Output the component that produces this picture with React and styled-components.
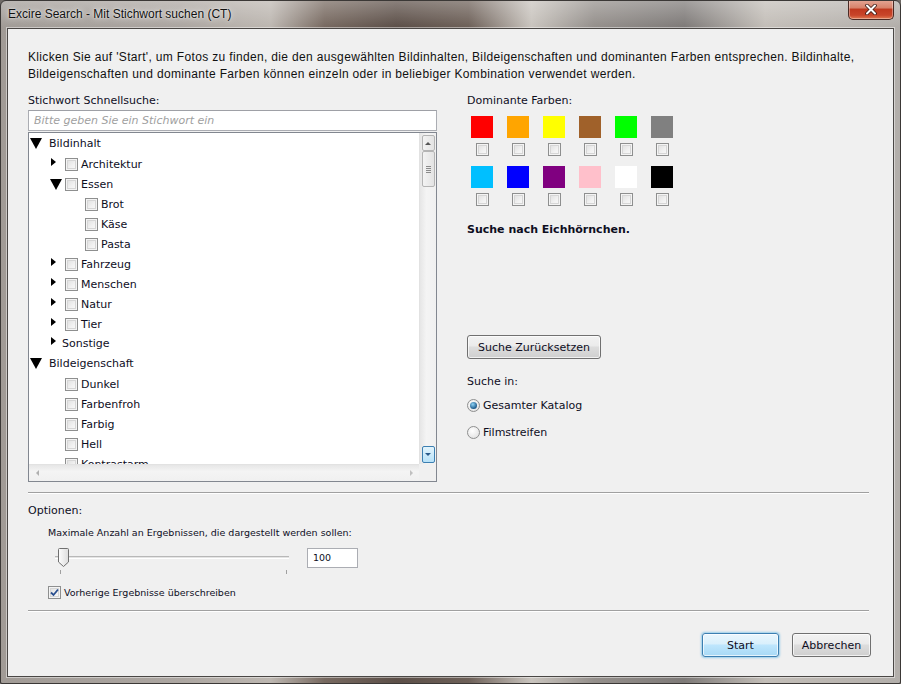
import styled, { createGlobalStyle } from "styled-components";

const GlobalStyle = createGlobalStyle`
  html, body {
    margin: 0;
    padding: 0;
    background: #6f6a66;
  }
  * {
    box-sizing: border-box;
  }
`;

const UI = `"DejaVu Sans", "Liberation Sans", sans-serif`;
const SEGOE = `"Liberation Sans", "Noto Sans", sans-serif`;

const Window = styled.div`
  width: 901px;
  height: 684px;
  border: 1px solid #3b3836;
  border-radius: 6px 6px 2px 2px;
  padding: 0 6px 6px 6px;
  display: flex;
  flex-direction: column;
  background:
    linear-gradient(to bottom, rgba(255, 255, 255, 0.28), rgba(255, 255, 255, 0) 26px),
    linear-gradient(
      to right,
      #a19b96 0%,
      #aca6a1 20%,
      #bdb7b1 30%,
      #776960 36%,
      #5c4f48 44%,
      #6d6058 52%,
      #c9c4be 59%,
      #948f8b 66%,
      #7e7a78 76%,
      #c3beb8 85%,
      #b2aeaa 100%
    );
  overflow: hidden;
`;

const TitleBar = styled.div`
  height: 27px;
  display: flex;
  align-items: flex-start;
  justify-content: space-between;
  margin-right: -6px;
`;

const Title = styled.div`
  font-family: ${SEGOE};
  font-size: 12px;
  color: #111;
  padding: 6px 0 0 1px;
  text-shadow: 0 0 6px rgba(255, 255, 255, 0.9), 0 0 2px rgba(255, 255, 255, 0.8);
`;

const CloseButton = styled.div`
  width: 46px;
  height: 20px;
  margin-right: 6px;
  margin-top: -1px;
  border: 1px solid #4a2a24;
  border-top: none;
  border-radius: 0 0 5px 5px;
  background: linear-gradient(to bottom, #e5a796 0%, #d8836c 40%, #c0391f 50%, #c8452a 80%, #e07a52 100%);
  box-shadow: inset 0 0 0 1px rgba(255, 255, 255, 0.35);
  display: flex;
  align-items: center;
  justify-content: center;
  svg {
    display: block;
  }
`;

const Client = styled.div`
  flex: 1;
  background: #f0f0f0;
  border: 1px solid #4a4745;
  box-shadow: 0 0 0 1px rgba(255, 255, 255, 0.45);
  padding: 20px 22px 0 20px;
  display: flex;
  flex-direction: column;
  font-family: ${UI};
  font-size: 11px;
  color: #0e0e1e;
`;

const Description = styled.p`
  margin: 0;
  font-family: ${SEGOE};
  font-size: 12px;
  letter-spacing: 0.34px;
  line-height: 17px;
  color: #111;
`;

const Main = styled.div`
  display: flex;
  gap: 30px;
  margin-top: 10px;
`;

const LeftCol = styled.div`
  width: 409px;
  display: flex;
  flex-direction: column;
`;

const RightCol = styled.div`
  flex: 1;
  display: flex;
  flex-direction: column;
`;

const Label = styled.div`
  line-height: 16px;
  height: 16px;
  margin-top: ${(p) => p.$top || 0}px;
  font-weight: ${(p) => (p.$bold ? "bold" : "normal")};
`;

const SearchInput = styled.input`
  margin-top: 1px;
  height: 21px;
  width: 100%;
  border: 1px solid #abadb3;
  border-top-color: #9ea0a6;
  background: #fff;
  padding: 0 5px;
  font-family: ${UI};
  font-size: 11px;
  font-style: italic;
  outline: none;
  &::placeholder {
    color: #a0a0a0;
  }
`;

const TreeBox = styled.div`
  margin-top: 1px;
  height: 350px;
  border: 1px solid #828790;
  background: #fff;
  display: grid;
  grid-template-columns: 1fr 17px;
  grid-template-rows: 1fr 17px;
`;

const TreeContent = styled.div`
  overflow: hidden;
`;

const Row = styled.div`
  height: ${(p) => p.$h}px;
  display: flex;
  align-items: center;
  padding-left: ${(p) => p.$indent}px;
  white-space: nowrap;
`;

const Expander = styled.span`
  width: ${(p) => p.$w || 12}px;
  flex: none;
  display: flex;
  align-items: center;
`;

const BigDown = styled.span`
  width: 0;
  height: 0;
  border-left: 6px solid transparent;
  border-right: 6px solid transparent;
  border-top: 11px solid #000;
`;

const SmallRight = styled.span`
  width: 0;
  height: 0;
  margin-left: 1px;
  margin-top: -4px;
  border-top: 4px solid transparent;
  border-bottom: 4px solid transparent;
  border-left: 5px solid #000;
`;

const Box = styled.span`
  width: 13px;
  height: 13px;
  flex: none;
  border: 1px solid #8e8f8f;
  background: linear-gradient(135deg, #dcdcdc 0%, #f2f2f2 60%, #fbfbfb 100%);
  box-shadow: inset 0 0 0 1px #f4f4f4, inset 0 0 0 2px #d6d6d6;
  display: inline-flex;
  align-items: center;
  justify-content: center;
  margin: ${(p) => p.$margin || "0 3px 0 3px"};
  svg {
    display: block;
  }
`;

const Check = ({ checked, margin }) => (
  <Box $margin={margin}>
    {checked && (
      <svg width="9" height="9" viewBox="0 0 9 9">
        <path d="M1 4.5 L3.5 7 L8 1.5" fill="none" stroke="#2a4f8f" strokeWidth="1.8" />
      </svg>
    )}
  </Box>
);

const VScroll = styled.div`
  background: linear-gradient(to right, #e6e6e6, #f4f4f4 40%, #f0f0f0);
  border-left: 1px solid #e2e2e2;
  display: flex;
  flex-direction: column;
  align-items: center;
  padding: 2px 0 1px;
`;

const ScrollBtn = styled.div`
  width: 13px;
  height: ${(p) => p.$h || 16}px;
  border: 1px solid ${(p) => (p.$hot ? "#3c7fb1" : "#b4b4b4")};
  border-radius: 2px;
  background: ${(p) =>
    p.$hot
      ? "linear-gradient(to bottom, #e3f4fc, #b7e1f8)"
      : "linear-gradient(to right, #f3f3f3, #e3e3e3)"};
  display: flex;
  align-items: center;
  justify-content: center;
`;

const ThumbGrip = styled.div`
  width: 5px;
  height: 7px;
  background: repeating-linear-gradient(to bottom, #8a8a8a 0 1px, transparent 1px 2px);
`;

const Spacer = styled.div`
  flex: 1;
`;

const TinyUp = styled.span`
  width: 0;
  height: 0;
  border-left: 3px solid transparent;
  border-right: 3px solid transparent;
  border-bottom: 3px solid ${(p) => p.$c || "#555"};
`;

const TinyDown = styled.span`
  width: 0;
  height: 0;
  border-left: 3px solid transparent;
  border-right: 3px solid transparent;
  border-top: 3px solid ${(p) => p.$c || "#555"};
`;

const HScroll = styled.div`
  background: linear-gradient(to bottom, #e6e6e6, #f4f4f4 40%, #f0f0f0);
  border-top: 1px solid #e2e2e2;
  display: flex;
  align-items: center;
  justify-content: space-between;
  padding: 0 6px 0 7px;
`;

const TinyLeft = styled.span`
  width: 0;
  height: 0;
  border-top: 3px solid transparent;
  border-bottom: 3px solid transparent;
  border-right: 3px solid #b0b0b0;
`;

const TinyRight = styled.span`
  width: 0;
  height: 0;
  border-top: 3px solid transparent;
  border-bottom: 3px solid transparent;
  border-left: 3px solid #c0c0c0;
`;

const Corner = styled.div`
  background: #f0f0f0;
`;

const Swatches = styled.div`
  margin-top: 7px;
  display: grid;
  grid-template-columns: repeat(6, 36px);
  row-gap: 10px;
`;

const SwatchCell = styled.div`
  width: 30px;
  display: flex;
  flex-direction: column;
  align-items: center;
  gap: 5px;
`;

const Swatch = styled.div`
  width: 22px;
  height: 22px;
  background: ${(p) => p.$color};
`;

const Button = styled.button`
  height: 24px;
  width: ${(p) => p.$w}px;
  padding: 0;
  margin-top: ${(p) => p.$top || 0}px;
  border: 1px solid ${(p) => (p.$primary ? "#3c7fb1" : "#707070")};
  border-radius: 3px;
  background: ${(p) =>
    p.$primary
      ? "linear-gradient(to bottom, #eaf6fd 0%, #d9f0fc 45%, #bee6fd 50%, #a7d9f5 100%)"
      : "linear-gradient(to bottom, #f2f2f2 0%, #ebebeb 45%, #dddddd 50%, #cfcfcf 100%)"};
  box-shadow: inset 0 0 0 1px rgba(255, 255, 255, 0.7)
    ${(p) => (p.$primary ? ", 0 0 2px 1px rgba(94, 182, 230, 0.6)" : "")};
  font-family: ${UI};
  font-size: 11px;
  color: #0e0e1e;
  text-align: center;
`;

const RadioRow = styled.div`
  display: flex;
  align-items: center;
  height: 16px;
  margin-top: ${(p) => p.$top}px;
  gap: 3px;
`;

const Radio = styled.span`
  width: 13px;
  height: 13px;
  border-radius: 50%;
  border: 1px solid #8e8f8f;
  background: radial-gradient(circle at 40% 35%, #ffffff, #dcdcdc);
  display: flex;
  align-items: center;
  justify-content: center;
  &::after {
    content: "";
    display: ${(p) => (p.$on ? "block" : "none")};
    width: 7px;
    height: 7px;
    border-radius: 50%;
    background: radial-gradient(circle at 40% 35%, #8fd3f5, #1c5a8c 70%);
  }
`;

const Separator = styled.div`
  height: 2px;
  border-top: 1px solid #a0a0a0;
  border-bottom: 1px solid #ffffff;
  margin-top: ${(p) => p.$top}px;
  margin-right: 2px;
`;

const OptionsBody = styled.div`
  padding-left: 20px;
  display: flex;
  flex-direction: column;
`;

const SmallText = styled.div`
  font-size: 9.5px;
  line-height: 14px;
  height: 14px;
  margin-top: ${(p) => p.$top || 0}px;
`;

const SliderRow = styled.div`
  display: flex;
  align-items: flex-start;
  margin-top: 8px;
`;

const Slider = styled.div`
  position: relative;
  width: 248px;
  height: 26px;
`;

const Track = styled.div`
  position: absolute;
  left: 7px;
  top: 8px;
  width: 234px;
  height: 3px;
  border-top: 1px solid #b8b8b8;
  border-bottom: 1px solid #fff;
  background: #e4e4e4;
`;

const Tick = styled.div`
  position: absolute;
  top: 22px;
  left: ${(p) => p.$x}px;
  width: 1px;
  height: 4px;
  background: #a0a0a0;
`;

const Thumb = styled.svg`
  position: absolute;
  left: 10px;
  top: 0;
`;

const NumberBox = styled.div`
  margin-left: 11px;
  width: 51px;
  height: 20px;
  border: 1px solid #abadb3;
  background: #fff;
  padding-left: 5px;
  line-height: 18px;
  font-size: 9.5px;
`;

const CheckRow = styled.div`
  display: flex;
  align-items: center;
  height: 16px;
  margin-top: 10px;
  font-size: 9.5px;
`;

const Footer = styled.div`
  display: flex;
  justify-content: flex-end;
  gap: 13px;
  margin-top: 21px;
`;

const tree = [
  { t: "Bildinhalt", indent: 1, exp: "down", w: 19, h: 21 },
  { t: "Architektur", indent: 21, exp: "right", check: true, h: 20 },
  { t: "Essen", indent: 21, exp: "down", check: true, h: 20 },
  { t: "Brot", indent: 41, exp: "none", check: true, h: 20 },
  { t: "Käse", indent: 41, exp: "none", check: true, h: 20 },
  { t: "Pasta", indent: 41, exp: "none", check: true, h: 20 },
  { t: "Fahrzeug", indent: 21, exp: "right", check: true, h: 20 },
  { t: "Menschen", indent: 21, exp: "right", check: true, h: 20 },
  { t: "Natur", indent: 21, exp: "right", check: true, h: 20 },
  { t: "Tier", indent: 21, exp: "right", check: true, h: 20 },
  { t: "Sonstige", indent: 21, exp: "right", h: 18 },
  { t: "Bildeigenschaft", indent: 1, exp: "down", w: 19, h: 22 },
  { t: "Dunkel", indent: 21, exp: "none", check: true, h: 20 },
  { t: "Farbenfroh", indent: 21, exp: "none", check: true, h: 20 },
  { t: "Farbig", indent: 21, exp: "none", check: true, h: 20 },
  { t: "Hell", indent: 21, exp: "none", check: true, h: 20 },
  { t: "Kontrastarm", indent: 21, exp: "none", check: true, h: 20 },
];

const colors = [
  "#ff0000", "#ffa500", "#ffff00", "#a0612a", "#00ff00", "#808080",
  "#00bfff", "#0000ff", "#800080", "#ffc0cb", "#ffffff", "#000000",
];

const TreeRow = ({ item }) => (
  <Row $h={item.h} $indent={item.indent}>
    <Expander $w={item.w}>
      {item.exp === "down" && <BigDown />}
      {item.exp === "right" && <SmallRight />}
    </Expander>
    {item.check && <Check />}
    <span>{item.t}</span>
  </Row>
);

export default function App() {
  return (
    <>
      <GlobalStyle />
      <Window>
        <TitleBar>
          <Title>Excire Search - Mit Stichwort suchen (CT)</Title>
          <CloseButton>
            <svg width="12" height="11" viewBox="0 0 12 11">
              <path d="M2 1.5 L10 9.5 M10 1.5 L2 9.5" stroke="#3b1a14" strokeWidth="3.6" strokeLinecap="round" />
              <path d="M2 1.5 L10 9.5 M10 1.5 L2 9.5" stroke="#ffffff" strokeWidth="2" strokeLinecap="round" />
            </svg>
          </CloseButton>
        </TitleBar>
        <Client>
          <Description>
            Klicken Sie auf 'Start', um Fotos zu finden, die den ausgewählten Bildinhalten, Bildeigenschaften und
            dominanten Farben entsprechen. Bildinhalte,
            <br />
            Bildeigenschaften und dominante Farben können einzeln oder in beliebiger Kombination verwendet werden.
          </Description>
          <Main>
            <LeftCol>
              <Label>Stichwort Schnellsuche:</Label>
              <SearchInput placeholder="Bitte geben Sie ein Stichwort ein" />
              <TreeBox>
                <TreeContent>
                  {tree.map((item) => (
                    <TreeRow key={item.t} item={item} />
                  ))}
                </TreeContent>
                <VScroll>
                  <ScrollBtn $h={16}>
                    <TinyUp />
                  </ScrollBtn>
                  <ScrollBtn $h={36}>
                    <ThumbGrip />
                  </ScrollBtn>
                  <Spacer />
                  <ScrollBtn $h={17} $hot>
                    <TinyDown $c="#2a5a8a" />
                  </ScrollBtn>
                </VScroll>
                <HScroll>
                  <TinyLeft />
                  <TinyRight />
                </HScroll>
                <Corner />
              </TreeBox>
            </LeftCol>
            <RightCol>
              <Label>Dominante Farben:</Label>
              <Swatches>
                {colors.map((c) => (
                  <SwatchCell key={c}>
                    <Swatch $color={c} />
                    <Check margin="0" />
                  </SwatchCell>
                ))}
              </Swatches>
              <Label $bold $top={16}>
                Suche nach Eichhörnchen.
              </Label>
              <Button $w={134} $top={97}>
                Suche Zurücksetzen
              </Button>
              <Label $top={15}>Suche in:</Label>
              <RadioRow $top={7}>
                <Radio $on />
                Gesamter Katalog
              </RadioRow>
              <RadioRow $top={11}>
                <Radio />
                Filmstreifen
              </RadioRow>
            </RightCol>
          </Main>
          <Separator $top={10} />
          <Label $top={9}>Optionen:</Label>
          <OptionsBody>
            <SmallText $top={7}>Maximale Anzahl an Ergebnissen, die dargestellt werden sollen:</SmallText>
            <SliderRow>
              <Slider>
                <Track />
                <Thumb width="11" height="19" viewBox="0 0 11 19">
                  <defs>
                    <linearGradient id="tg" x1="0" x2="1">
                      <stop offset="0" stopColor="#fdfdfd" />
                      <stop offset="1" stopColor="#dcdcdc" />
                    </linearGradient>
                  </defs>
                  <path d="M0.5 1.5 Q0.5 0.5 1.5 0.5 L9.5 0.5 Q10.5 0.5 10.5 1.5 L10.5 14 L5.5 18.5 L0.5 14 Z" fill="url(#tg)" stroke="#707070" />
                </Thumb>
                <Tick $x={12} />
                <Tick $x={238} />
              </Slider>
              <NumberBox>100</NumberBox>
            </SliderRow>
            <CheckRow>
              <Check checked margin="0 3px 0 0" />
              Vorherige Ergebnisse überschreiben
            </CheckRow>
          </OptionsBody>
          <Separator $top={10} />
          <Footer>
            <Button $w={77} $primary>
              Start
            </Button>
            <Button $w={79}>Abbrechen</Button>
          </Footer>
        </Client>
      </Window>
    </>
  );
}
